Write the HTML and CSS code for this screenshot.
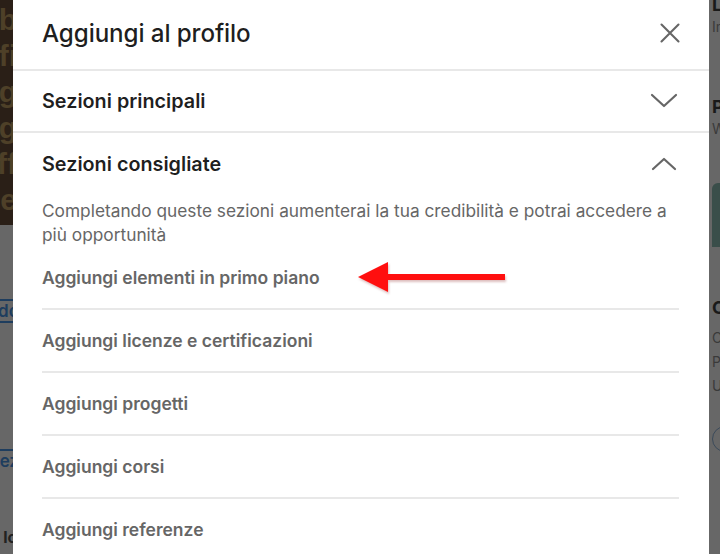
FILE: index.html
```html
<!DOCTYPE html>
<html lang="it">
<head>
  <meta charset="UTF-8">
  <title>Aggiungi al profilo</title>
  <link rel="stylesheet" href="styles.css">
</head>
<body>
  <div class="stage">
    <div class="backdrop backdrop-left">
      <div class="promo">
        <span>ab</span>
        <span>fi</span>
        <span>og</span>
        <span>og</span>
        <span>ff</span>
        <span>ie</span>
      </div>
      <div class="page-bits">
        <span class="link-bit first">do</span>
        <span class="link-bit second">ez</span>
        <span class="text-bit">lc</span>
      </div>
    </div>

    <div class="modal">
      <div class="modal-header">
        <h1>Aggiungi al profilo</h1>
        <button class="icon-btn" aria-label="Chiudi">
          <svg width="20" height="20" viewBox="0 0 20 20">
            <path d="M1.5 1.5 L18.5 18.5 M18.5 1.5 L1.5 18.5" stroke="#666" stroke-width="2.1" fill="none" stroke-linecap="round"/>
          </svg>
        </button>
      </div>

      <div class="section">
        <div class="section-head">
          <h2>Sezioni principali</h2>
          <svg class="chevron" width="28" height="16" viewBox="0 0 28 16">
            <path d="M2 2 L14 13 L26 2" stroke="#666" stroke-width="2.2" fill="none" stroke-linecap="round" stroke-linejoin="round"/>
          </svg>
        </div>
      </div>

      <div class="section open">
        <div class="section-head">
          <h2>Sezioni consigliate</h2>
          <svg class="chevron" width="28" height="16" viewBox="0 0 28 16">
            <path d="M3 13 L14 3 L25 13" stroke="#666" stroke-width="2.2" fill="none" stroke-linecap="round" stroke-linejoin="round"/>
          </svg>
        </div>
        <p class="section-desc">Completando queste sezioni aumenterai la tua credibilità e potrai accedere a più opportunità</p>
        <ul class="add-list">
          <li class="marked">
            Aggiungi elementi in primo piano
            <svg class="arrow" width="152" height="40" viewBox="0 0 152 40">
              <path d="M30 17 L148 17 L148 23 L30 23 Z" fill="#ff0f0f"/>
              <path d="M1 20 L31 5 L31 35 Z" fill="#ff0f0f"/>
            </svg>
          </li>
          <li>Aggiungi licenze e certificazioni</li>
          <li>Aggiungi progetti</li>
          <li>Aggiungi corsi</li>
          <li>Aggiungi referenze</li>
        </ul>
      </div>
    </div>

    <div class="backdrop backdrop-right">
      <span class="r-title">L</span>
      <span class="r-sub">In</span>
      <span class="r-title gap">P</span>
      <span class="r-sub">W</span>
      <div class="r-banner"></div>
      <span class="r-title gap2">C</span>
      <span class="r-sub first">C</span>
      <span class="r-sub">P</span>
      <span class="r-sub">U</span>
      <div class="r-circle"></div>
    </div>
  </div>
</body>
</html>
```

FILE: styles.css
```css
:root {
  --text: rgba(0, 0, 0, 0.88);
  --muted: #666;
  --divider: #e8e8e8;
  --shade: #676767;
}

body {
  margin: 0;
  background-color: var(--shade);
  font-family: 'Inter', 'Liberation Sans', sans-serif;
  color: var(--text);
  overflow: hidden;
}

.stage {
  display: flex;
  height: 554px;
}

.backdrop {
  overflow: hidden;
  flex-shrink: 0;
}

.backdrop-left {
  width: 13px;
  display: flex;
  flex-direction: column;
}

.promo {
  height: 223px;
  background-color: #2a1f17;
  display: flex;
  flex-direction: column;
  align-items: flex-end;
  padding-top: 2px;
}

.promo span {
  font-family: 'Liberation Sans', sans-serif;
  font-weight: 700;
  font-size: 30px;
  line-height: 36px;
  color: #4e4028;
  margin-right: -4px;
}

.page-bits {
  display: flex;
  flex-direction: column;
  align-items: flex-end;
}

.link-bit {
  font-size: 17px;
  font-weight: 600;
  color: #1e3d5e;
  border-top: 2px solid #1e3d5e;
  border-bottom: 2px solid #1e3d5e;
  margin-right: -6px;
}

.link-bit.first {
  margin-top: 74px;
}

.link-bit.second {
  margin-top: 126px;
  border-bottom: none;
}

.text-bit {
  margin-top: 56px;
  font-size: 16px;
  font-weight: 700;
  color: #222;
  margin-right: -4px;
}

.modal {
  width: 696px;
  background-color: #fff;
  flex-shrink: 0;
}

.modal-header {
  height: 66px;
  display: flex;
  align-items: center;
  justify-content: space-between;
  padding: 0 29px 3px 29px;
  border-bottom: 2px solid var(--divider);
}

h1 {
  margin: 0;
  font-size: 24.2px;
  font-weight: 500;
  letter-spacing: -0.1px;
  color: var(--text);
}

.icon-btn {
  border: none;
  background: none;
  padding: 0;
  width: 20px;
  height: 20px;
  display: flex;
}

.section {
  border-bottom: 2px solid var(--divider);
}

.section.open {
  border-bottom: none;
}

.section-head {
  height: 60px;
  display: flex;
  align-items: center;
  justify-content: space-between;
  padding: 0 31px 0 29px;
}

.section.open .section-head {
  height: 62px;
}

h2 {
  margin: 0;
  font-size: 19.8px;
  font-weight: 600;
  color: var(--text);
}

.section-desc {
  margin: 4px 29px 0 29px;
  font-size: 17.3px;
  line-height: 24px;
  color: var(--muted);
}

.add-list {
  list-style: none;
  margin: 0 30px 0 29px;
  padding: 0;
}

.add-list li {
  height: 61px;
  display: flex;
  align-items: center;
  font-size: 17.5px;
  font-weight: 600;
  color: #666;
  border-bottom: 2px solid var(--divider);
}

.add-list li.marked {
  position: relative;
}

.arrow {
  position: absolute;
  left: 315px;
  top: 10px;
  filter: drop-shadow(1px 2px 1px rgba(120, 0, 0, 0.25));
}

.backdrop-right {
  flex: 1;
  display: flex;
  flex-direction: column;
  padding-left: 3px;
}

.r-title {
  font-size: 18px;
  font-weight: 700;
  color: #1a1a1a;
  line-height: 20px;
  margin-top: -5px;
}

.r-sub {
  font-size: 14px;
  color: #3a3a3a;
  line-height: 24px;
}

.r-title.gap {
  margin-top: 58px;
}

.r-banner {
  height: 64px;
  margin-top: 42px;
  background-color: #3a4e4a;
  border-radius: 6px 0 0 0;
}

.r-title.gap2 {
  margin-top: 51px;
}

.r-sub.first {
  margin-top: 8px;
}

.r-circle {
  margin-top: 28px;
  width: 24px;
  height: 24px;
  border: 1.5px solid #3b4a5a;
  border-radius: 50%;
}
```
